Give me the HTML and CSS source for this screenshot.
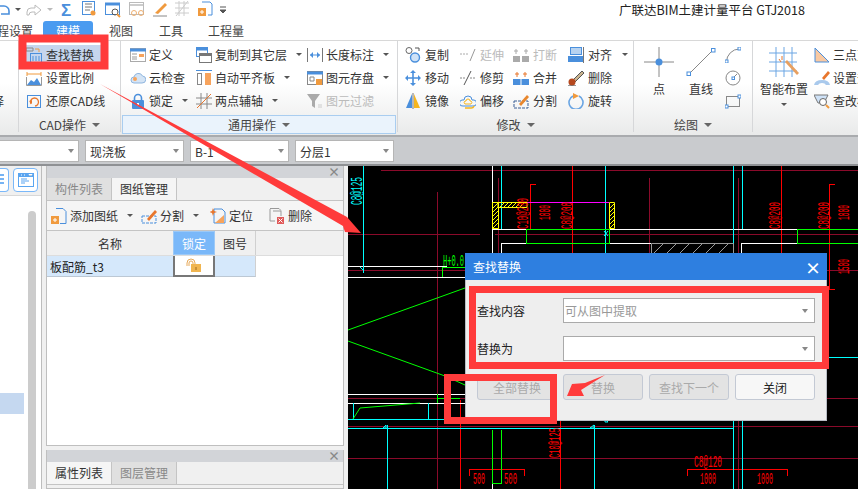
FILE: index.html
```html
<!DOCTYPE html>
<html>
<head>
  <meta charset="UTF-8">
  <title>广联达BIM土建计量平台 GTJ2018</title>
  <link rel="stylesheet" href="styles.css">
</head>
<body>
<div class="app">

  <!-- title row -->
  <div class="titlebar">
    <div class="quick">
      <svg width="250" height="21" viewBox="0 0 250 21" fill="none">
        <path d="M-2 6h6a5 5 0 0 1 5 5v3H1" stroke="#4a8fdc" stroke-width="1.6"/>
        <path d="M15 8l3 3 3-3z" fill="#555"/>
        <path d="M41 10l-6-5v3h-4a4 4 0 0 0-4 4v3h2a3 3 0 0 1 3-3h3v3z" stroke="#bbb"/>
        <path d="M47 8l3 3 3-3z" fill="#bbb"/>
        <text x="61" y="16" class="sigma">Σ</text>
        <rect x="82.500" y="1.500" width="12" height="13" stroke="#4a8fdc"/><circle cx="93" cy="13" r="2.500" fill="#f09a3e"/><path d="M85 4h7M85 7h7M85 10h5" stroke="#777"/>
        <rect x="105.500" y="3.500" width="14" height="11" stroke="#4a8fdc"/><path d="M105 4h15" stroke="#4a8fdc" stroke-width="3"/><circle cx="115" cy="12" r="3" stroke="#555"/><path d="M117 14l3 3" stroke="#f09a3e" stroke-width="2"/>
        <rect x="129.500" y="2.500" width="14" height="12" stroke="#bbb"/><path d="M130 5h13" stroke="#ccc" stroke-width="2"/><circle cx="134" cy="13" r="2.500" stroke="#f0b070"/><circle cx="141" cy="13" r="2.500" stroke="#f0b070"/>
        <path d="M155 13l10-10 2 2-9 9z" fill="#f09a3e"/><path d="M153 16h14" stroke="#888"/>
        <path d="M175 3h14M175 8h14M175 13h14M179 1v15M184 1v15M176 16l12-15" stroke="#ccc"/>
        <path d="M202 2h8l2 2v11h-4" stroke="#4a8fdc"/><rect x="198" y="8" width="8" height="8" fill="#f09a3e"/><path d="M202 10v4M200 12h4" stroke="#fff"/>
        <path d="M220 7h6M220 10l3 3 3-3z" stroke="#555" fill="#555"/>
      </svg>
    </div>
    <div class="app-title">广联达BIM土建计量平台 GTJ2018</div>
  </div>

  <!-- tabs -->
  <div class="menu-tabs">
    <span class="mtab mtab-cut">程设置</span>
    <span class="mtab mtab-on">建模</span>
    <span class="mtab mtab-view">视图</span>
    <span class="mtab mtab-tool">工具</span>
    <span class="mtab mtab-qty">工程量</span>
  </div>

  <!-- ribbon -->
  <div class="ribbon">
    <div class="group g-sel">
      <div class="rows"><div class="item"></div><div class="item"></div><div class="item"><span class="cut-char">选择</span></div></div>
    </div>

    <div class="group g-cad">
      <div class="rows">
        <div class="item item-hot">
          <svg class="ic" viewBox="0 0 16 16" fill="none"><path d="M0 1h7v3H0z" stroke="#888"/><path d="M9 2h4v3" stroke="#f09a3e"/><rect x="4.500" y="6.500" width="11" height="9" stroke="#4a8fdc"/><path d="M7 9v5M10 9v5M13 9v5" stroke="#4a8fdc"/></svg>
          查找替换</div>
        <div class="item">
          <svg class="ic" viewBox="0 0 16 16" fill="none"><path d="M1 4h14M1 2v4M15 2v4" stroke="#f09a3e"/><path d="M1 15l4-5 3 2 3-4 4 7z" fill="#4a8fdc"/><path d="M.500 7v8.500h15V7" stroke="#999"/></svg>
          设置比例</div>
        <div class="item">
          <svg class="ic" viewBox="0 0 16 16" fill="none"><rect x="1.500" y="2.500" width="13" height="12" stroke="#4a8fdc"/><path d="M5 11a4 4 0 1 1 4 2" stroke="#e8762c" stroke-width="1.300"/><path d="M3 8l3-1v4z" fill="#e8762c"/></svg>
          还原CAD线</div>
      </div>
      <div class="glabel">CAD操作<i class="caret"></i></div>
    </div>

    <div class="group g-common">
      <div class="rows">
        <div class="item">
          <svg class="ic" viewBox="0 0 16 16" fill="none"><rect x=".5" y="1.500" width="15" height="13" fill="#fff" stroke="#aaa"/><path d="M0 3h16" stroke="#4a8fdc" stroke-width="3"/><path d="M2 7h5M2 10h5M2 12h5" stroke="#999"/><path d="M9 7h5v3H9z" fill="#f7a35c"/></svg>
          定义</div>
        <div class="item">
          <svg class="ic" viewBox="0 0 16 16" fill="none"><rect x=".5" y=".5" width="11" height="9" stroke="#4a8fdc"/><path d="M0 2h12" stroke="#4a8fdc" stroke-width="3"/><rect x="3.500" y="6.500" width="12" height="9" fill="#fff" stroke="#777"/><path d="M3 8h13" stroke="#777" stroke-width="2"/></svg>
          复制到其它层<i class="caret c-dark"></i></div>
        <div class="item">
          <svg class="ic" viewBox="0 0 16 16" fill="none"><path d="M.5 1v14M15.500 1v14" stroke="#777"/><path d="M3 8h10" stroke="#4a8fdc"/><path d="M3 8l3-3v6zM13 8l-3-3v6z" fill="#4a8fdc"/></svg>
          长度标注<i class="caret c-dark"></i></div>

        <div class="item">
          <svg class="ic" viewBox="0 0 16 16" fill="none"><path d="M4 13a3 3 0 0 1 0-6 4.500 4.500 0 0 1 8.500-1A3.500 3.500 0 0 1 12 13z" fill="#d4e4f5" stroke="#8fb5de"/><circle cx="5" cy="9" r="2" fill="#f7a35c"/></svg>
          云检查</div>
        <div class="item">
          <svg class="ic" viewBox="0 0 16 16" fill="none"><path d="M0 .5h16" stroke="#4a8fdc"/><rect x="1.500" y="3.500" width="4" height="11" stroke="#888"/><rect x="9" y="3" width="6" height="12" fill="#f7a35c"/></svg>
          自动平齐板<i class="caret c-dark"></i></div>
        <div class="item">
          <svg class="ic" viewBox="0 0 16 16" fill="none"><rect x=".5" y="1.500" width="15" height="13" fill="#fff" stroke="#888"/><path d="M0 3h16" stroke="#4a8fdc" stroke-width="3"/><path d="M3 7h4v4H3z" stroke="#888"/><rect x="9" y="9" width="6" height="6" fill="#f09a3e"/></svg>
          图元存盘<i class="caret c-dark"></i></div>

        <div class="item">
          <svg class="ic" viewBox="0 0 16 16" fill="none"><path d="M4.500 8V5a3.500 3.500 0 0 1 7 0v3" stroke="#4a8fdc" stroke-width="1.600"/><rect x="2" y="7" width="12" height="9" rx="1" fill="#4a8fdc"/><path d="M8 10v3" stroke="#fff" stroke-width="2"/></svg>
          锁定<i class="caret c-dark"></i></div>
        <div class="item">
          <svg class="ic" viewBox="0 0 16 16" fill="none"><path d="M0 5h16M0 11h16M5 0v16M11 0v16" stroke="#888"/><path d="M1 15L15 1" stroke="#e8762c"/></svg>
          两点辅轴<i class="caret c-dark"></i></div>
        <div class="item off">
          <svg class="ic" viewBox="0 0 16 16" fill="none"><path d="M0 1h13L8 8v7l-3-2V8z" fill="#aaa"/><path d="M11 12h4M11 14h4" stroke="#ccc"/></svg>
          图元过滤</div>
      </div>
      <div class="glabel glabel-on">通用操作<i class="caret"></i></div>
    </div>

    <div class="group g-edit">
      <div class="rows">
        <div class="item">
          <svg class="ic" viewBox="0 0 16 16" fill="none"><circle cx="4" cy="3.500" r="3" stroke="#666"/><circle cx="10" cy="10.500" r="4.500" fill="#cfe2f7" stroke="#4a8fdc" stroke-width="1.400"/><path d="M10 1h4v3" stroke="#555"/></svg>
          复制</div>
        <div class="item off">
          <svg class="ic" viewBox="0 0 16 16" fill="none"><path d="M0 7h9" stroke="#aaa" stroke-dasharray="2 1"/><path d="M10 14l5-12" stroke="#999"/></svg>
          延伸</div>
        <div class="item off">
          <svg class="ic" viewBox="0 0 16 16" fill="none"><rect y="9" width="7" height="6" fill="#aaa"/><rect x="9" y="9" width="7" height="6" fill="#aaa"/><path d="M3 2v5M13 2v5M1 4h4M11 4h4" stroke="#aaa"/></svg>
          打断</div>
        <div class="item">
          <svg class="ic" viewBox="0 0 16 16" fill="none"><rect x="2.500" y=".5" width="11" height="7" fill="#b8d3f0" stroke="#4a8fdc"/><rect y="9" width="15" height="6" fill="#4a8fdc"/><path d="M15.500 0v16" stroke="#777"/></svg>
          对齐<i class="caret c-dark"></i></div>

        <div class="item">
          <svg class="ic" viewBox="0 0 16 16" fill="none"><path d="M8 1v14M1 8h14" stroke="#4a8fdc" stroke-width="1.600"/><path d="M8 0l3 3H5zM8 16l-3-3h6zM0 8l3-3v6zM16 8l-3 3V5z" fill="#4a8fdc"/></svg>
          移动</div>
        <div class="item">
          <svg class="ic" viewBox="0 0 16 16" fill="none"><path d="M0 8h5M10 8h5" stroke="#888" stroke-dasharray="2 1"/><path d="M4 15l7-14" stroke="#555"/></svg>
          修剪</div>
        <div class="item">
          <svg class="ic" viewBox="0 0 16 16" fill="none"><rect y="9" width="7.500" height="6" fill="#4a8fdc"/><rect x="8.500" y="9" width="7.500" height="6" fill="#4a8fdc"/><path d="M4 2v5M12 2v5M2 4h4M10 4h4" stroke="#e8762c"/></svg>
          合并</div>
        <div class="item">
          <svg class="ic" viewBox="0 0 16 16" fill="none"><path d="M5 10L14 1l2 2-9 9z" fill="#c9b48f" stroke="#555"/><circle cx="4" cy="12" r="3.500" fill="#b5481e"/><path d="M0 16h8" stroke="#333"/></svg>
          删除</div>

        <div class="item">
          <svg class="ic" viewBox="0 0 16 16" fill="none"><path d="M7 1L1 15h6z" fill="#4a8fdc"/><path d="M9 1l6 14H9z" fill="#f5b51e"/><path d="M8 0v16" stroke="#777"/></svg>
          镜像</div>
        <div class="item">
          <svg class="ic" viewBox="0 0 16 16" fill="none"><path d="M3 13a3 3 0 0 1-1-6h2a4 4 0 0 1 8 0h2a3 3 0 0 1-1 6z" stroke="#4a8fdc"/><path d="M5 15h6a3 3 0 0 0 3-2" stroke="#f5b51e" stroke-width="1.500"/><path d="M5 11a2 2 0 0 1 0-3h1a2 2 0 0 1 4 0h1a2 2 0 0 1 0 3z" stroke="#f5b51e"/></svg>
          偏移</div>
        <div class="item">
          <svg class="ic" viewBox="0 0 16 16" fill="none"><path d="M1 8h14v7H1z" stroke="#3a5f95" stroke-dasharray="3 1"/><path d="M6 11l8-9 2 2-8 9z" fill="#e8862c"/></svg>
          分割</div>
        <div class="item">
          <svg class="ic" viewBox="0 0 16 16" fill="none"><path d="M5 3a7 7 0 1 0 6 0" stroke="#6aa5e3" stroke-width="1.600"/><path d="M5 0l6 3-6 3z" fill="#f09a3e"/></svg>
          旋转</div>
      </div>
      <div class="glabel">修改<i class="caret"></i></div>
    </div>

    <div class="group g-draw">
      <div class="rows">
        <div class="big big-dot">
          <svg width="30" height="30" viewBox="0 0 30 30" fill="none"><path d="M15 0v30M0 15h30" stroke="#888"/><circle cx="15" cy="15" r="3.500" fill="#4a8fdc"/></svg>
          <span>点</span>
        </div>
        <div class="big big-line">
          <svg width="30" height="30" viewBox="0 0 30 30" fill="none"><path d="M3 27L27 3" stroke="#888"/><rect x="1" y="25" width="3.500" height="3.500" fill="#fff" stroke="#4a8fdc"/><rect x="25.500" y="1.500" width="3.500" height="3.500" fill="#fff" stroke="#4a8fdc"/></svg>
          <span>直线</span>
        </div>
        <div class="mini">
          <svg class="ic" viewBox="0 0 16 16" fill="none"><path d="M1.500 15a13 13 0 0 1 13-13" stroke="#888"/><rect x="0" y="13" width="3" height="3" fill="#fff" stroke="#4a8fdc"/><rect x="13" y="0" width="3" height="3" fill="#fff" stroke="#4a8fdc"/></svg>
          <svg class="ic" viewBox="0 0 16 16" fill="none"><circle cx="8" cy="8" r="7" stroke="#888"/><path d="M8 8l4-4" stroke="#888"/><rect x="7" y="7" width="2.500" height="2.500" fill="#fff" stroke="#4a8fdc"/></svg>
          <svg class="ic" viewBox="0 0 16 16" fill="none"><rect x="1.500" y="3.500" width="13" height="10" stroke="#888"/><rect x="0" y="12" width="3" height="3" fill="#fff" stroke="#4a8fdc"/><rect x="13" y="2" width="3" height="3" fill="#fff" stroke="#4a8fdc"/></svg>
        </div>
      </div>
      <div class="glabel">绘图<i class="caret"></i></div>
    </div>

    <div class="group g-smart">
      <div class="rows">
        <div class="big big-smart">
          <svg width="30" height="30" viewBox="0 0 30 30" fill="none"><path d="M0 6h28M0 15h28M0 24h28M7 0v30M15 0v30M23 0v30" stroke="#6aa5e3"/><path d="M16 15l12 13 2-2-12-13z" fill="#e8a060"/><path d="M10 12l2 3M13 9v4" stroke="#e8762c"/></svg>
          <span>智能布置</span>
          <i class="caret c-dark"></i>
        </div>
        <div class="stack">
          <div class="item">
            <svg class="ic" viewBox="0 0 16 16" fill="none"><path d="M1 1v14h14z" fill="#f9c9a2" stroke="#4a8fdc"/></svg>
            三点变斜</div>
          <div class="item">
            <svg class="ic" viewBox="0 0 16 16" fill="none"><path d="M8 8l6-7 2 2-6 7z" fill="#e8762c"/><path d="M0 15q1-5 8-5t8 5h-4q-1-2-4-2t-4 2z" fill="#a9c9ec"/></svg>
            设置升降</div>
          <div class="item">
            <svg class="ic" viewBox="0 0 16 16" fill="none"><path d="M0 2h14l-4 8H4z" fill="#cfe2f7" stroke="#777"/><circle cx="9" cy="9" r="3.500" fill="#fff" stroke="#666"/><path d="M12 12l3 3" stroke="#f09a3e" stroke-width="2"/></svg>
            查改标高</div>
        </div>
      </div>
    </div>
  </div>

  <!-- selectors -->
  <div class="selbar">
    <div class="combo combo-first"><i class="caret c-gray"></i></div>
    <div class="combo">现浇板<i class="caret c-gray"></i></div>
    <div class="combo">B-1<i class="caret c-gray"></i></div>
    <div class="combo">分层1<i class="caret c-gray"></i></div>
  </div>

  <div class="main">
    <div class="nav">
      <div class="nav-btns">
        <div class="nav-btn nav-btn-cut"><svg width="8" height="14" viewBox="0 0 8 14" fill="none"><path d="M0 2h4M0 6h4M0 10h4" stroke="#4a9bf0" stroke-width="1.500"/></svg></div>
        <div class="nav-btn"><svg width="16" height="14" viewBox="0 0 16 14"><rect width="16" height="14" fill="#5aa5f0"/><rect x="1" y="4" width="14" height="9" fill="#fff"/><path d="M3 6h6M3 8h8M3 10h4" stroke="#5aa5f0"/><path d="M3 2h1M6 2h1M11 1.500h3l-1.500 1.500z" stroke="#fff"/></svg></div>
      </div>
      <div class="nav-list">
        <div class="nav-sel"></div>
        <div class="nav-scroll"></div>
      </div>
    </div>

    <div class="side">
      <div class="dock dock-top">
        <div class="dock-head">×</div>
        <div class="dock-tabs">
          <span class="dtab">构件列表</span>
          <span class="dtab dtab-on">图纸管理</span>
        </div>
        <div class="tools">
          <span class="tool t-add">
            <svg class="ic" viewBox="0 0 16 16" fill="none"><path d="M5 .5h7l3 3v12H9" stroke="#4a8fdc"/><rect y="8" width="8" height="8" fill="#f09a3e"/><path d="M4 10v4M2 12h4" stroke="#fff"/></svg>
            添加图纸<i class="caret c-dark"></i></span>
          <span class="tool t-split">
            <svg class="ic" viewBox="0 0 16 16" fill="none"><path d="M1 8h14v7H1z" stroke="#4a8fdc" stroke-dasharray="3 1"/><path d="M6 11l8-9 2 2-8 9z" fill="#e8762c"/></svg>
            分割<i class="caret c-dark"></i></span>
          <span class="tool t-loc">
            <svg class="ic" viewBox="0 0 16 16" fill="none"><path d="M4 1h8l3 3v11H4z" stroke="#4a8fdc"/><path d="M5 15l9-8v8z" fill="#f7a35c"/><path d="M3 0l1 3 3 1-3 1-1 3-1-3-3-1 3-1z" fill="#e8762c"/></svg>
            定位</span>
          <span class="tool t-del">
            <svg class="ic" viewBox="0 0 16 16" fill="none"><path d="M1 .5h9l2 2M1 1v12h5" stroke="#999"/><path d="M4 3h8v5" stroke="#999"/><rect x="8" y="9" width="7" height="7" fill="#e05a5a"/><path d="M9.500 10.500l4 4M13.500 10.500l-4 4" stroke="#fff"/></svg>
            删除</span>
        </div>
        <div class="tbl">
          <div class="tr th">
            <div class="td td-name">名称</div>
            <div class="td td-lock td-on">锁定</div>
            <div class="td td-no">图号</div>
          </div>
          <div class="tr row">
            <div class="td td-name td-left">板配筋_t3</div>
            <div class="td td-lock td-cur">
              <svg width="16" height="15" viewBox="0 0 16 15" fill="none"><path d="M1 8V5a4 4 0 0 1 8 0v3M3 8V5a2 2 0 0 1 4 0v3" stroke="#e6a95a"/><rect x="5" y="6" width="10" height="8" fill="#f0b550"/><path d="M10 9v3" stroke="#a06a20"/></svg>
            </div>
            <div class="td td-no"></div>
          </div>
        </div>
      </div>
      <div class="dock dock-bottom">
        <div class="dock-head">×</div>
        <div class="dock-tabs">
          <span class="dtab dtab-on">属性列表</span>
          <span class="dtab">图层管理</span>
        </div>
      </div>
    </div>

    <div class="canvas">
      <svg class="cad" width="510" height="323" viewBox="348 166 510 323" fill="none">
        <g stroke="#8a0a2a" shape-rendering="crispEdges">
          <path d="M381 170.500H858M348 234.500H480M495 234.500H858M348 270.500H858M348 398.500H858M348 426.500H858M348 458.500H858"/>
          <path d="M437.500 192V489M649.500 178V253M738.500 178V489M498.500 178V253"/>
        </g>
        <g stroke="#f00" shape-rendering="crispEdges">
          <path d="M572.500 166V253M781.500 166V253M460.500 400V489M560.500 420V489"/>
          <path d="M536 184.500H530.500V229M835 184.500H829.500V289.500H835"/>
          <path d="M469.500 476V469.500H524.500V476M687.500 476V469.500H787.500V476"/>
        </g>
        <g stroke="#fff" shape-rendering="crispEdges">
          <path d="M348 266.500H447M348 277.500H465M348 394.500H465M348 403.500H465M492.500 166V253M492.500 229.500H858M501.500 243V253M501.500 243.500H651M741.500 243V253M741.500 243.500H858M492.500 430V489"/>
        </g>
        <g stroke="#0ff" shape-rendering="crispEdges">
          <path d="M363.500 166V273M501.500 166V229M605.500 166V253M733.500 166V253M742.500 166V229"/>
          <path d="M348 419.500H445M348 428.500H733M387.500 425V489M594.500 425V489M353.500 403V419M428.500 403V419M733.500 421V489M742.500 421V489M827 357.500H858"/>
        </g>
        <g stroke="#0f0">
          <path d="M465 288L348 330M348 341L445 376L465 385" />
          <path d="M353 419L360 408L420 403"/>
          <path d="M442.500 277V267.500H465M526.500 229V243.500H609.500V229M797.500 229V243.500H858M526 229.500H610M797 229.500H858M492.500 430V483.500H501.500V430M437 394V403M437 398H460" shape-rendering="crispEdges"/>
        </g>
        <path d="M527 202.500H609" stroke="#f0f" shape-rendering="crispEdges"/>
        <g stroke="#ff0">
          <path d="M492.500 202.500h6v26h-6zM498 202.500h29v5h-29zM609.500 202.500h5v26h-5z"/>
          <path d="M493 208l5-5M493 212l5-5M493 216l5-5M493 220l5-5M493 224l5-5M493 228l5-5M500 207l4-4M504 207l4-4M508 207l4-4M512 207l4-4M516 207l4-4M520 207l4-4M610 208l4-4M610 212l4-4M610 216l4-4M610 220l4-4M610 224l4-4M610 228l4-4"/>
        </g>
        <path d="M651.500 253V243.500H733.500V253M654 253l10-10M667 253l10-10M680 253l10-10M693 253l10-10M706 253l10-10M719 253l10-10" stroke="#999"/>
        <path d="M386 425l-3 3h3zM594 425l-4 3h4zM605 419l3 3h-3zM363 270l-3-3" stroke="#0ff"/>
        <path d="M604 231l4 5M608 231l-4 5" stroke="#0ff"/>

        <g class="cad-txt" fill="#0ff">
          <text transform="translate(362 205) rotate(-90)" textLength="28" lengthAdjust="spacingAndGlyphs">C8@125</text>
        </g>
        <g class="cad-txt" fill="#f00">
          <text transform="translate(528 229) rotate(-90)" textLength="31" lengthAdjust="spacingAndGlyphs">C10@200</text>
          <text transform="translate(550 220) rotate(-90)" textLength="15" lengthAdjust="spacingAndGlyphs">1000</text>
          <text transform="translate(572 229) rotate(-90)" textLength="27" lengthAdjust="spacingAndGlyphs">C8@200</text>
          <text transform="translate(780 229) rotate(-90)" textLength="27" lengthAdjust="spacingAndGlyphs">C8@200</text>
          <text transform="translate(829 229) rotate(-90)" textLength="27" lengthAdjust="spacingAndGlyphs">C8@200</text>
          <text transform="translate(849 220) rotate(-90)" textLength="15" lengthAdjust="spacingAndGlyphs">1000</text>
          <text transform="translate(849 274) rotate(-90)" textLength="15" lengthAdjust="spacingAndGlyphs">1500</text>
          <text transform="translate(560 458) rotate(-90)" textLength="30" lengthAdjust="spacingAndGlyphs">C10@125</text>
          <text x="694" y="467" textLength="28" lengthAdjust="spacingAndGlyphs">C8@120</text>
          <text x="700" y="484" textLength="16" lengthAdjust="spacingAndGlyphs">1000</text>
          <text x="757" y="484" textLength="16" lengthAdjust="spacingAndGlyphs">1000</text>
          <text x="473" y="484" textLength="12" lengthAdjust="spacingAndGlyphs">500</text>
          <text x="504" y="484" textLength="13" lengthAdjust="spacingAndGlyphs">500</text>
        </g>
        <text class="cad-txt" fill="#0f0" x="443" y="266" textLength="21" lengthAdjust="spacingAndGlyphs">H+0.0</text>
      </svg>

      <div class="dialog">
        <div class="dlg-head"><span>查找替换</span><b>×</b></div>
        <div class="dlg-body">
          <div class="field">
            <label>查找内容</label>
            <div class="fbox fbox-hint">可从图中提取<i class="caret c-gray"></i></div>
          </div>
          <div class="field">
            <label>替换为</label>
            <div class="fbox"><i class="caret c-gray"></i></div>
          </div>
          <div class="dlg-btns">
            <span class="btn btn-off">全部替换</span>
            <span class="btn btn-off">替换</span>
            <span class="btn btn-off">查找下一个</span>
            <span class="btn">关闭</span>
          </div>
        </div>
      </div>
    </div>
  </div>

  <!-- red marks drawn over the shot -->
  <svg class="marks" width="858" height="489" viewBox="0 0 858 489" fill="none">
    <g stroke="#ff3b3b" stroke-width="7">
      <path d="M22.500 38.500H104.500V65.500H22.500Z" stroke-width="8"/>
      <rect x="472.500" y="289.500" width="353" height="76"/>
      <rect x="447.500" y="377.500" width="106" height="43"/>
    </g>
    <path d="M100 84L347 217L361 233L345 232L343 226Z" fill="#ff3b3b"/>
    <path d="M605 375L585 383L572 384L567 396L584 396L581 390Z" fill="#ff3b3b"/>
  </svg>
</div>
</body>
</html>
```

FILE: styles.css
```css
* {
  box-sizing: border-box;
}
body {
  margin: 0;
  background: #fff;
  font-family: "Noto Sans CJK SC", "Liberation Sans", sans-serif;
  font-size: 12px;
  color: #333;
}
.app {
  position: relative;
  width: 858px;
  height: 489px;
  overflow: hidden;
  display: flex;
  flex-direction: column;
}
.ic {
  width: 16px;
  height: 16px;
  flex: none;
}

/* caret */
.caret {
  display: inline-block;
  width: 0;
  height: 0;
  margin-left: 6px;
  border-left: 4px solid transparent;
  border-right: 4px solid transparent;
  border-top: 4px solid #666;
}
.c-dark {
  border-left-width: 3px;
  border-right-width: 3px;
  border-top-width: 3px;
  border-top-color: #555;
}
.c-gray {
  border-left-width: 3.5px;
  border-right-width: 3.5px;
  border-top-color: #888;
}

/* title row */
.titlebar {
  height: 21px;
  display: flex;
  background: #fff;
}
.quick {
  width: 619px;
  height: 21px;
  flex: none;
}
.quick svg {
  display: block;
}
.sigma {
  font-family: "Liberation Sans", sans-serif;
  font-size: 17px;
  font-weight: bold;
  fill: #4a8fdc;
}
.app-title {
  font-size: 12.500px;
  line-height: 20px;
  color: #222;
  white-space: nowrap;
}

/* tabs */
.menu-tabs {
  height: 19px;
  display: flex;
  background: #fff;
  line-height: 20px;
}
.mtab {
  flex: none;
  font-size: 12px;
  color: #444;
}
.mtab-cut {
  width: 46px;
  margin-left: -3px;
}
.mtab-on {
  width: 50px;
  text-align: center;
  background: #4a9bf0;
  color: #fff;
  border-radius: 3px 3px 0 0;
}
.mtab-view {
  margin-left: 16px;
}
.mtab-tool {
  margin-left: 26px;
}
.mtab-qty {
  margin-left: 25px;
}

/* ribbon */
.ribbon {
  height: 97px;
  display: flex;
  flex: none;
  border-top: 1px solid #d8d8d8;
  border-bottom: 2px solid #a9abae;
  background: linear-gradient(#fff 45%, #e9eaea);
}
.group {
  position: relative;
  flex: none;
  border-right: 1px solid #d6d7d9;
  margin-bottom: 3px;
}
.rows {
  display: grid;
  grid-auto-rows: 23px;
  padding-top: 2px;
  height: 74px;
}
.item {
  display: flex;
  align-items: center;
  gap: 3px;
  white-space: nowrap;
  font-size: 12px;
  color: #333;
}
.off {
  color: #bbb;
}
.item .caret {
  margin-left: 6px;
}
.glabel {
  height: 19px;
  margin: 0 1px;
  display: flex;
  align-items: center;
  justify-content: center;
  color: #444;
  border: 1px solid transparent;
}
.glabel-on {
  background: #eaf3fc;
  border-color: #a9cdf0;
}
.g-sel {
  width: 19px;
  overflow: hidden;
}
.cut-char {
  margin-left: -20px;
}
.g-cad {
  width: 102px;
}
.g-cad .rows {
  padding-left: 7px;
}
.g-cad .item {
  gap: 4px;
}
.g-cad .item-hot {
  width: 75px;
  height: 19px;
  margin-top: 2px;
  background: #c5d6ee;
}
.g-common {
  width: 277px;
}
.g-common .rows {
  padding-left: 9px;
  grid-template-columns: 66px 111px 1fr;
}
.g-edit {
  width: 236px;
}
.g-edit .rows {
  padding-left: 7px;
  grid-template-columns: 55px 53px 55px 1fr;
}
.g-edit .item {
  gap: 4px;
}
.g-draw {
  width: 119px;
}
.g-draw .rows {
  display: flex;
  padding-left: 10px;
}
.big {
  display: flex;
  flex-direction: column;
  align-items: center;
  font-size: 12px;
  padding-top: 4px;
  color: #333;
}
.big span {
  margin-top: 3px;
  line-height: 18px;
}
.big-dot {
  width: 30px;
}
.big-line {
  width: 30px;
  margin-left: 12px;
}
.mini {
  display: flex;
  flex-direction: column;
  gap: 7px;
  padding-top: 4px;
  margin-left: 9px;
}
.g-smart {
  width: 105px;
  border-right: 0;
}
.g-smart .rows {
  display: flex;
  padding-left: 6px;
}
.big-smart {
  width: 50px;
  flex: none;
}
.big-smart .caret {
  margin: 5px 0 0;
}
.stack {
  margin-left: 5px;
  display: grid;
  grid-auto-rows: 23px;
}

/* selectors */
.selbar {
  height: 29px;
  flex: none;
  display: flex;
  gap: 6px;
  padding-top: 3px;
  margin-left: -20px;
  background: #c9cbce;
  border-bottom: 2px solid #8f9194;
}
.combo {
  width: 99px;
  height: 22px;
  display: flex;
  align-items: center;
  justify-content: space-between;
  padding: 0 4px;
  background: #fff;
  border: 1px solid #b5b5b5;
  font-size: 12px;
  color: #333;
}
.combo-first {
  justify-content: flex-end;
}

/* main */
.main {
  flex: 1;
  min-height: 0;
  display: flex;
  background: #f0f0f0;
}
.nav {
  width: 42px;
  flex: none;
  display: flex;
  flex-direction: column;
  background: #fff;
  border-right: 1px solid #bdbdbd;
}
.nav-btns {
  height: 30px;
  display: flex;
  gap: 4px;
  padding-top: 2px;
  background: #f0f0f0;
  border-bottom: 1px solid #d8d8d8;
}
.nav-btn {
  width: 25px;
  height: 24px;
  display: flex;
  align-items: center;
  justify-content: center;
  background: #fff;
  border: 1px solid #7ab8f9;
  border-radius: 4px;
}
.nav-btn-cut {
  width: 9px;
  border-left: 0;
  border-radius: 0 4px 4px 0;
}
.nav-list {
  position: relative;
  flex: 1;
}
.nav-sel {
  position: absolute;
  left: 0;
  top: 197px;
  width: 24px;
  height: 21px;
  background: #c5d8f0;
}
.nav-scroll {
  position: absolute;
  left: 28px;
  top: 15px;
  bottom: 0;
  width: 8px;
  border-radius: 4px 4px 0 0;
  background: #ccc;
}
.side {
  width: 298px;
  flex: none;
  margin: 0 4px 0 4px;
  display: flex;
  flex-direction: column;
  gap: 4px;
}
.dock {
  border: 1px solid #bfbfbf;
  border-top: 0;
  background: #fff;
}
.dock-top {
  height: 280px;
  flex: none;
}
.dock-bottom {
  flex: 1;
  background: #f0f0f0;
}
.dock-head {
  height: 12px;
  line-height: 11px;
  padding-right: 3px;
  text-align: right;
  font-size: 12px;
  font-weight: bold;
  color: #888;
  background: #d2d4d8;
}
.dock-tabs {
  height: 23px;
  display: flex;
  background: #f0f0f0;
  border-bottom: 1px solid #c4c4c4;
}
.dtab {
  width: 65px;
  line-height: 21px;
  text-align: center;
  font-size: 12px;
  color: #888;
  background: #e0e0e0;
  border-right: 1px solid #c4c4c4;
}
.dtab-on {
  background: #f5f5f5;
  color: #333;
}
.tools {
  height: 30px;
  display: flex;
  align-items: center;
  padding-left: 4px;
  background: #f5f5f5;
  border-bottom: 1px solid #c4c4c4;
}
.tool {
  display: flex;
  align-items: center;
  gap: 3px;
  white-space: nowrap;
}
.t-add {
  width: 90px;
}
.t-split {
  width: 69px;
}
.t-loc {
  width: 59px;
}
.tr {
  display: flex;
}
.th {
  height: 25px;
  background: #f0f0f0;
  border-bottom: 1px solid #ddd;
}
.row {
  height: 21px;
}
.td {
  display: flex;
  align-items: center;
  justify-content: center;
}
.td-name {
  width: 126px;
}
.td-lock {
  width: 42px;
}
.td-no {
  width: 41px;
  border-right: 1px solid #d0d0d0;
}
.td-on {
  background: #7ab8f9;
  color: #fff;
  border: 1px solid #9cc9f7;
}
.row .td {
  background: #d5e8fb;
  border-bottom: 1px solid #bcc8d4;
}
.td-left {
  justify-content: flex-start;
  padding-left: 3px;
  color: #222;
}
.row .td-cur {
  background: #fff;
  border: 2px solid #777;
  border-top: 0;
}

/* canvas */
.canvas {
  position: relative;
  flex: 1;
  background: #000;
}
.cad {
  display: block;
}
.cad-txt {
  font-family: "Liberation Mono", monospace;
  font-size: 16px;
}
.dialog {
  position: absolute;
  left: 117px;
  top: 87px;
  width: 362px;
  height: 168px;
  background: #eee;
  border: 1px solid #b8bcc4;
  border-top: 0;
  color: #222;
}
.dlg-head {
  height: 27px;
  display: flex;
  align-items: center;
  justify-content: space-between;
  padding: 0 6px 0 8px;
  margin: 0 -1px;
  background: #2e7fe0;
  color: #fff;
  font-size: 12px;
}
.dlg-head b {
  font-size: 16px;
  font-weight: bold;
}
.dlg-body {
  padding: 18px 11px 0 11px;
}
.field {
  display: flex;
  align-items: center;
  margin-bottom: 13px;
}
.field label {
  width: 86px;
  flex: none;
}
.fbox {
  flex: 1;
  height: 25px;
  display: flex;
  align-items: center;
  justify-content: flex-end;
  padding: 0 6px 0 1px;
  background: #fff;
  border: 1px solid #aaa;
}
.fbox-hint {
  justify-content: space-between;
  color: #999;
}
.dlg-btns {
  display: flex;
  gap: 6px;
}
.btn {
  width: 80px;
  height: 26px;
  display: flex;
  align-items: center;
  justify-content: center;
  background: #f7f7f7;
  border: 1px solid #c3c9d4;
  border-radius: 3px;
  color: #222;
}
.btn-off {
  background: #e3e3e3;
  color: #aaa;
}

.marks {
  position: absolute;
  left: 0;
  top: 0;
  pointer-events: none;
}
```
